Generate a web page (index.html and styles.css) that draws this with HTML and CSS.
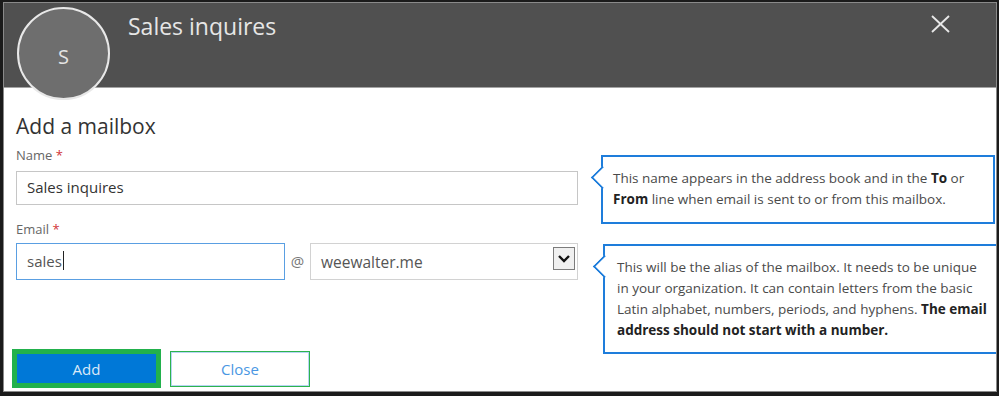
FILE: index.html
```html
<!DOCTYPE html>
<html lang="en">
<head>
    <meta charset="UTF-8">
    <meta name="viewport" content="width=device-width, initial-scale=1.0">
    <title>Add a mailbox</title>
    <link rel="stylesheet" href="styles.css">
</head>
<body>
    <div class="window">
        <header class="panel-head">
            <div class="avatar"><span>S</span></div>
            <h1 class="panel-title">Sales inquires</h1>
            <button class="close-x" type="button" aria-label="Close">
                <svg width="19" height="18" viewBox="0 0 19 18">
                    <line x1="1" y1="1" x2="18" y2="17" />
                    <line x1="18" y1="1" x2="1" y2="17" />
                </svg>
            </button>
        </header>

        <main class="panel-body">
            <h2 class="panel-heading">Add a mailbox</h2>

            <div class="form-row">
                <form class="fields">
                    <label class="field-label">Name <span class="req">*</span></label>
                    <div class="text-box name-box">Sales inquires</div>

                    <label class="field-label email-label">Email <span class="req">*</span></label>
                    <div class="email-row">
                        <div class="text-box email-box">sales<span class="caret"></span></div>
                        <span class="at">@</span>
                        <div class="text-box select-box">
                            <span>weewalter.me</span>
                            <span class="drop-btn">
                                <svg width="20" height="21" viewBox="0 0 20 21">
                                    <polyline points="5,8 10,13 15,8" />
                                </svg>
                            </span>
                        </div>
                    </div>

                    <div class="actions">
                        <button type="button" class="btn-add">Add</button>
                        <button type="button" class="btn-close">Close</button>
                    </div>
                </form>

                <aside class="hints">
                    <div class="callout callout-name">
                        This name appears in the address book and in the <b>To</b> or<br>
                        <b>From</b> line when email is sent to or from this mailbox.
                    </div>
                    <div class="callout callout-email">
                        This will be the alias of the mailbox. It needs to be unique<br>
                        in your organization. It can contain letters from the basic<br>
                        Latin alphabet, numbers, periods, and hyphens. <b>The email</b><br>
                        <b>address should not start with a number.</b>
                    </div>
                </aside>
            </div>
        </main>
    </div>
</body>
</html>
```

FILE: styles.css
```css
body {
    margin: 0;
    padding: 0;
    background: #1b1b1b; /* dark frame round the dialog */
    font-family: 'Open Sans', 'Noto Sans', sans-serif;
}
.window {
    position: relative;
    box-sizing: border-box;
    width: 994px;
    height: 390px;
    margin: 2px 0 0 3px;
    border: 1px solid #8a8a8a;
    background: #ffffff;
    overflow: hidden;
}

/* header */
.panel-head {
    display: flex;
    justify-content: space-between;
    align-items: flex-start;
    height: 84px;
    padding-left: 124px;
    background: #505050;
    border-bottom: 1px solid #a4a4a4;
}
.avatar {
    position: absolute;
    left: 13px;
    top: 4px;
    box-sizing: border-box;
    width: 93px;
    height: 93px;
    border: 2px solid #e8e8e8;
    border-radius: 50%;
    background: #6e6e6e;
    color: #e4e4e4;
    font-size: 20px;
    display: flex;
    justify-content: center;
    align-items: center;
}
.avatar span {
    padding-top: 6px;
}
.panel-title {
    margin: 0;
    padding-top: 8px;
    font-size: 23px;
    line-height: 30px;
    font-weight: 400;
    color: #e6e6e6;
}
.close-x {
    margin: 12px 46px 0 0;
    padding: 0;
    border: none;
    background: none;
    line-height: 0;
}
.close-x line {
    stroke: #e8e8e8;
    stroke-width: 1.8;
}

/* body */
.panel-body {
    padding: 24px 0 0 12px;
}
.panel-heading {
    margin: 0;
    font-size: 21px;
    line-height: 28px;
    font-weight: 400;
    color: #333333;
}
.form-row {
    display: flex;
    margin-top: 6px;
}
.fields {
    flex: none;
    width: 562px;
    margin: 0;
}
.field-label {
    display: block;
    font-size: 13px;
    line-height: 18px;
    color: #666666;
}
.req {
    color: #d13438; /* red asterisk */
}
.text-box {
    box-sizing: border-box;
    display: flex;
    align-items: center;
    padding-left: 10px;
    border: 1px solid #c6c6c6;
    font-size: 15px;
    color: #333333;
}
.name-box {
    margin-top: 7px;
    height: 34px;
    padding-bottom: 3px;
}
.email-label {
    margin-top: 15px;
}
.email-row {
    display: flex;
    align-items: center;
    margin-top: 5px;
}
.email-box {
    width: 269px;
    height: 37px;
    border-color: #5a9fe2; /* focused field */
    color: #555555;
    padding-bottom: 2px;
}
.caret {
    display: inline-block;
    width: 0;
    height: 19px;
    margin-left: 1px;
    border-left: 1px solid #222222;
}
.at {
    width: 25px;
    text-align: center;
    font-size: 15px;
    color: #777777;
    padding-bottom: 2px;
}
.select-box {
    width: 268px;
    height: 37px;
    justify-content: space-between;
    align-items: flex-start;
    color: #555555;
    font-size: 15.5px;
    border-color: #d2d2d2;
}
.select-box > span:first-child {
    padding-top: 7px;
}
.drop-btn {
    box-sizing: border-box;
    width: 22px;
    height: 23px;
    margin: 3px 2px 0 0;
    border: 1px solid #7c7c7c;
    background: #f0f0f0;
    line-height: 0;
}
.drop-btn polyline {
    fill: none;
    stroke: #111111;
    stroke-width: 2.4;
}

/* buttons */
.actions {
    display: flex;
    align-items: flex-start;
    gap: 9px;
    margin: 69px 0 0 -4px;
}
.btn-add, .btn-close {
    box-sizing: border-box;
    padding: 0;
    font-family: inherit;
    font-size: 15px;
}
.btn-add {
    width: 149px;
    height: 39px;
    border: 5px solid #22b14c; /* green highlight */
    background: #0078d7;
    color: #dbe9f8;
}
.btn-close {
    width: 140px;
    height: 36px;
    margin-top: 2px;
    border: 1px solid #2db34e;
    box-shadow: inset 0 0 0 1px #b7d5f3;
    background: #ffffff;
    color: #4a97e3;
}

/* help callouts */
.hints {
    display: flex;
    flex-direction: column;
    gap: 20px;
    margin: 9px 0 0 23px;
    width: 420px;
}
.callout {
    position: relative;
    box-sizing: border-box;
    border: 2px solid #1e7ddb;
    padding: 11px 10px 12px;
    font-size: 13.5px;
    line-height: 21px;
    color: #4a4a4a;
    white-space: nowrap;
    background: #ffffff;
}
.callout b {
    color: #222222;
}
.callout::before {
    content: '';
    position: absolute;
    left: -9.5px;
    top: 12px;
    box-sizing: border-box;
    width: 17px;
    height: 17px;
    background: #ffffff;
    border-left: 2px solid #1e7ddb;
    border-bottom: 2px solid #1e7ddb;
    transform: rotate(45deg);
    clip-path: polygon(0 0, 0 100%, 100% 100%, 100% 75%, 25% 0);
}
.callout-name {
    width: 394px;
}
.callout-email {
    width: 410px;
    margin-left: 2px;
    padding: 11px 12px;
}
```
